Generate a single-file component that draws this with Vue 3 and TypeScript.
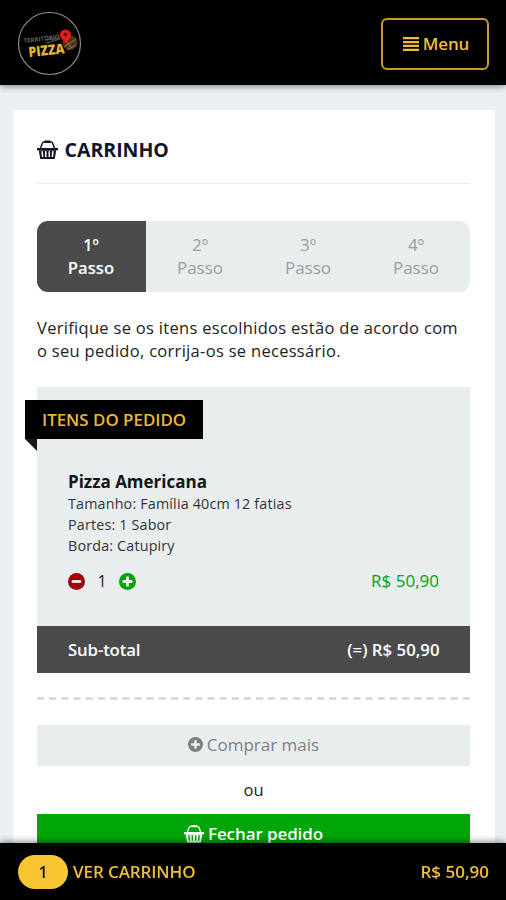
<script setup lang="ts">
interface Step {
  label: string
  active: boolean
}

const steps: Step[] = [
  { label: '1º', active: true },
  { label: '2º', active: false },
  { label: '3º', active: false },
  { label: '4º', active: false },
]

const item = {
  name: 'Pizza Americana',
  details: ['Tamanho: Família 40cm 12 fatias', 'Partes: 1 Sabor', 'Borda: Catupiry'],
  quantity: 1,
  price: 'R$ 50,90',
}
</script>

<template>
  <div class="screen">
    <header class="topbar">
      <svg class="logo" viewBox="0 0 66 66" role="img">
        <circle cx="33.500" cy="32.500" r="31" fill="#000" stroke="#8d8d8d" stroke-width="1.2" />
        <circle cx="54" cy="31.500" r="7.600" fill="#4b3218" />
        <path d="M48 36l12-8M51 39l9-5M49 29l7 8" stroke="#876039" stroke-width="1.300" />
        <path d="M30 32l14-4M29 29l15-2" stroke="#3e3e3e" stroke-width="1.500" />
        <text class="logo-small" x="8" y="32" transform="rotate(-7 8 32)" textLength="36" lengthAdjust="spacingAndGlyphs">TERRITÓRIO</text>
        <path d="M49.500 30.500c-3-3-5.500-4.500-5.500-7.500a5.500 5.500 0 0 1 11 0c0 3-2.500 5-5.500 7.500z" fill="#f01818" transform="translate(0 1)" />
        <circle cx="49.500" cy="23.500" r="1.900" fill="#5b1010" />
        <text class="logo-big" x="13" y="46" transform="rotate(-6 13 46)" textLength="36" lengthAdjust="spacingAndGlyphs">PIZZA</text>
      </svg>
      <button class="menu">
        <svg class="bars" viewBox="0 0 16 14"><path d="M0 0h16v2.300H0zM0 3.900h16v2.300H0zM0 7.800h16v2.300H0zM0 11.700h16v2.300H0z" /></svg>
        <span>Menu</span>
      </button>
    </header>

    <main class="card">
      <h1 class="title">
        <svg class="basket" viewBox="0 0 21 20">
          <path class="handle" d="M3.500 8L5.400 3.200Q6 1.700 8 1.700h5q2 0 2.600 1.500L17.500 8" />
          <path d="M7.500.5h6v2.400h-6zM0 8h21v2.300H0z" />
          <path fill-rule="evenodd" d="M1.700 10.300h17.600L17.700 19H3.300zM4.300 11.300l.6 5.700h1.500l-.5-5.700zM7.900 11.300l.2 5.700h1.400v-5.700zM11.500 11.300V17h1.400l.2-5.700zM15.100 11.300l-.5 5.700h1.500l.6-5.700z" />
        </svg>
        <span>CARRINHO</span>
      </h1>

      <ol class="steps">
        <li v-for="step in steps" :key="step.label" :class="{ active: step.active }">
          <span>{{ step.label }}</span>
          <span>Passo</span>
        </li>
      </ol>

      <p class="intro">Verifique se os itens escolhidos estão de acordo com<br />o seu pedido, corrija-os se necessário.</p>

      <section class="order">
        <h2 class="ribbon"><span>ITENS DO PEDIDO</span></h2>
        <div class="item">
          <h3>{{ item.name }}</h3>
          <p v-for="detail in item.details" :key="detail">{{ detail }}</p>
          <div class="item-foot">
            <svg class="round minus" viewBox="0 0 18 18"><circle cx="9" cy="9" r="9" /><path d="M4 7.500h10v3H4z" /></svg>
            <span class="qty">{{ item.quantity }}</span>
            <svg class="round plus" viewBox="0 0 18 18"><circle cx="9" cy="9" r="9" /><path d="M7.500 3.800h3v3.700h3.700v3h-3.700v3.700h-3v-3.700H3.800v-3h3.700z" /></svg>
            <span class="price">{{ item.price }}</span>
          </div>
        </div>
        <div class="subtotal">
          <span>Sub-total</span>
          <span class="sum">(=) {{ item.price }}</span>
        </div>
      </section>

      <svg class="divider" viewBox="0 0 433 3"><path d="M0 1.500h433" /></svg>

      <button class="action more">
        <svg class="round" viewBox="0 0 18 18"><circle cx="9" cy="9" r="9" /><path d="M7.500 3.800h3v3.700h3.700v3h-3.700v3.700h-3v-3.700H3.800v-3h3.700z" /></svg>
        <span>Comprar mais</span>
      </button>
      <p class="or">ou</p>
      <button class="action checkout">
        <svg class="basket" viewBox="0 0 21 20">
          <path class="handle" d="M3.500 8L5.400 3.200Q6 1.700 8 1.700h5q2 0 2.600 1.500L17.500 8" />
          <path d="M7.500.5h6v2.400h-6zM0 8h21v2.300H0z" />
          <path fill-rule="evenodd" d="M1.700 10.300h17.600L17.700 19H3.300zM4.300 11.300l.6 5.700h1.500l-.5-5.700zM7.900 11.300l.2 5.700h1.400v-5.700zM11.500 11.300V17h1.400l.2-5.700zM15.100 11.300l-.5 5.700h1.500l.6-5.700z" />
        </svg>
        <span>Fechar pedido</span>
      </button>
    </main>

    <footer class="cartbar">
      <span class="badge">{{ item.quantity }}</span>
      <span class="view">VER CARRINHO</span>
      <span class="total">{{ item.price }}</span>
    </footer>
  </div>
</template>

<style>
body {
  margin: 0;
  background: #ecf0f4;
}
</style>

<style scoped>
* {
  box-sizing: border-box;
}
.screen {
  height: 900px;
  overflow: hidden;
  display: flex;
  flex-direction: column;
  background: #ecf0f3;
  font-family: 'Open Sans', 'Noto Sans', sans-serif;
  font-size: 16px;
  color: #222;
  white-space: nowrap;
}
h1, h2, h3, p, ol {
  margin: 0;
  padding: 0;
  list-style: none;
}
button {
  border: 0;
  padding: 0;
  font: inherit;
}
svg {
  flex: none;
}
.topbar {
  flex: none;
  height: 85px;
  background: #000;
  box-shadow: 0 1px 7px rgba(0, 0, 0, 0.5);
  display: flex;
  align-items: center;
  justify-content: space-between;
  padding: 2px 17px 0 16px;
}
.logo {
  width: 66px;
  height: 66px;
}
.logo-small {
  font: 700 6px 'Open Sans', sans-serif;
  fill: #606060;
}
.logo-big {
  font: 800 14px 'Open Sans', sans-serif;
  fill: #e6b32d;
}
.menu {
  width: 108px;
  height: 52px;
  border: 2px solid #c39a2b;
  border-radius: 6px;
  background: #000;
  color: #f0bd36;
  font-size: 17px;
  font-weight: 600;
  letter-spacing: -0.15px;
  display: flex;
  align-items: center;
  justify-content: center;
  gap: 4px;
}
.bars {
  width: 16px;
  height: 14px;
  margin-left: 2px;
  fill: currentColor;
}
.card {
  flex: none;
  width: 482px;
  height: 790px;
  margin: 25px 0 0 13px;
  padding: 0 25px 0 24px;
  background: #fff;
  display: flex;
  flex-direction: column;
}
.title {
  flex: none;
  height: 74px;
  padding-top: 6px;
  border-bottom: 1px solid #eceeee;
  display: flex;
  align-items: center;
  gap: 6.5px;
  font-size: 19.5px;
  font-weight: 700;
  color: #10142c;
}
.basket {
  width: 21px;
  height: 20px;
  fill: currentColor;
}
.handle {
  fill: none;
  stroke: currentColor;
  stroke-width: 1.5;
}
.steps {
  flex: none;
  height: 71px;
  margin-top: 37px;
  padding-bottom: 1px;
  display: grid;
  grid-template-columns: 109px repeat(3, 108px);
  background: linear-gradient(90deg, #4b4b4b 109px, #e8edee 109px);
  border-radius: 11px;
  overflow: hidden;
}
.steps li {
  display: flex;
  flex-direction: column;
  align-items: center;
  justify-content: center;
  line-height: 23.5px;
  font-size: 17px;
  color: #999d9e;
}
.steps .active {
  padding-right: 1px;
  color: #fff;
  font-size: 16.700px;
  font-weight: 600;
}
.intro {
  flex: none;
  margin-top: 24px;
  height: 71px;
  font-size: 16.5px;
  letter-spacing: 0.3px;
  line-height: 23.300px;
}
.order {
  flex: none;
  height: 286px;
  background: #e8edee;
  display: flex;
  flex-direction: column;
}
.ribbon {
  position: relative;
  width: 178px;
  height: 39px;
  margin: 13px 0 0 -12px;
  padding-left: 17px;
  background: #000;
  color: #e8b936;
  font-size: 16.900px;
  font-weight: 600;
  display: flex;
  align-items: center;
}
.ribbon::after {
  content: '';
  position: absolute;
  left: 0;
  top: 100%;
  border-top: 12px solid #181818;
  border-left: 12px solid transparent;
}
.item {
  flex: 1;
  padding: 31px 31px 0 31px;
}
.item h3 {
  height: 24px;
  font-size: 17px;
  line-height: 23px;
  font-weight: 700;
  color: #151515;
}
.item p {
  font-size: 14.300px;
  letter-spacing: 0.18px;
  line-height: 20.8px;
  color: #333;
}
.item-foot {
  display: flex;
  align-items: center;
  height: 24px;
  margin-top: 13px;
}
.round {
  width: 17px;
  height: 17px;
}
.round circle {
  fill: currentColor;
}
.round path {
  fill: #e8edee;
}
.minus {
  color: #a3000b;
}
.plus {
  color: #00a30c;
}
.qty {
  width: 34px;
  text-align: center;
}
.price {
  margin-left: auto;
  padding-bottom: 2px;
  font-size: 17px;
  color: #00a30c;
}
.subtotal {
  height: 47px;
  padding: 0 30.5px 0 31px;
  background: #4b4b4b;
  color: #fff;
  font-size: 16.800px;
  letter-spacing: -0.15px;
  font-weight: 600;
  display: flex;
  align-items: center;
  justify-content: space-between;
}
.sum {
  letter-spacing: 0;
}
.divider {
  width: 433px;
  height: 3px;
  margin-top: 24px;
  stroke: #ccc;
  stroke-width: 2.200;
  stroke-dasharray: 7.200 4.970;
}
.action {
  flex: none;
  height: 41px;
  padding-bottom: 2px;
  font-size: 17px;
  display: flex;
  align-items: center;
  justify-content: center;
  gap: 4px;
}
.more {
  margin-top: 25px;
  background: #e8edee;
  color: #7c8082;
}
.more .round {
  width: 15px;
  height: 15px;
}
.or {
  flex: none;
  height: 48px;
  line-height: 48px;
  text-align: center;
  font-size: 16.5px;
}
.checkout {
  background: #00a607;
  color: #fff;
  font-weight: 600;
  letter-spacing: -0.1px;
}
.checkout .basket {
  width: 20px;
}
.cartbar {
  position: fixed;
  left: 0;
  right: 0;
  bottom: 0;
  height: 57px;
  padding: 0 17px 0 18px;
  background: #000;
  box-shadow: 0 -1px 7px rgba(0, 0, 0, 0.5);
  color: #eebd39;
  font-size: 17px;
  font-weight: 600;
  letter-spacing: -0.1px;
  display: flex;
  align-items: center;
}
.badge {
  width: 50px;
  height: 34px;
  border-radius: 17px;
  background: #f9c633;
  color: #111;
  display: flex;
  align-items: center;
  justify-content: center;
  font-size: 16px;
}
.view {
  margin-left: 5px;
}
.total {
  margin-left: auto;
  letter-spacing: 0;
}
</style>
